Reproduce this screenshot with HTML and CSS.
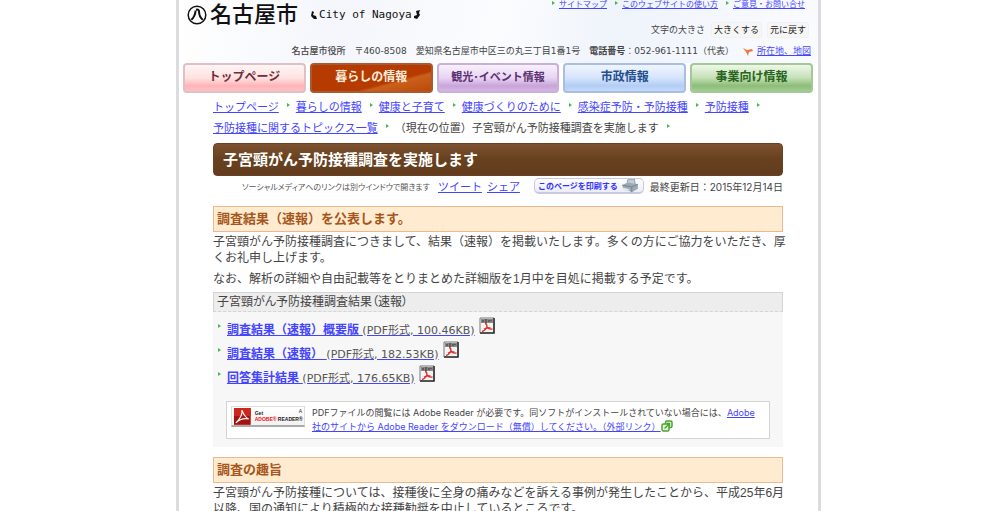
FILE: index.html
```html
<!DOCTYPE html>
<html lang="ja">
<head>
<meta charset="utf-8">
<title>子宮頸がん予防接種調査を実施します</title>
<link rel="stylesheet" href="styles.css">
</head>
<body>
<div class="page">
  <header class="header">
    <div class="header-top">
      <div class="logo">
        <svg class="logo-mark" viewBox="0 0 20 20" aria-hidden="true"><circle cx="10" cy="10" r="8.8" fill="none" stroke="#111" stroke-width="1.5"/><path d="M8.6 5.5C8.3 9.500 7 12.500 4.300 14.800M9 4.800C11.200 4.200 12 5 12 6.500C12.100 10.500 13.600 13 15.800 14.700" fill="none" stroke="#111" stroke-width="2"/></svg>
        <span class="logo-name">名古屋市</span>
        <span class="logo-en"><svg class="flourish" viewBox="0 0 6 10" aria-hidden="true"><path d="M1 1L3 2L2 5L5 6L6 9L3 9L0 6Z" fill="#111"/></svg>City of Nagoya<svg class="flourish" viewBox="0 0 6 10" aria-hidden="true"><path d="M2 1L6 0L5 3L6 5L3 9L0 8L0 6L3 5Z" fill="#111"/></svg></span>
      </div>
      <div class="header-side">
        <ul class="top-links">
          <li><a href="#">サイトマップ</a></li>
          <li><a href="#">このウェブサイトの使い方</a></li>
          <li><a href="#">ご意見・お問い合せ</a></li>
        </ul>
        <div class="text-size">
          <span>文字の大きさ</span>
          <button type="button">大きくする</button>
          <button type="button">元に戻す</button>
        </div>
      </div>
    </div>
    <address class="address">
      <b class="office">名古屋市役所</b>
      <span>〒460-8508</span>
      <span>愛知県名古屋市中区三の丸三丁目1番1号</span>
      <span><b>電話番号</b>：052-961-1111（代表）</span>
      <span class="map"><svg class="map-icon" viewBox="0 0 10 8" aria-hidden="true"><path d="M0 0L4 2L9 1L10 3L6 4L5 8L3 4Z" fill="#f07840"/></svg><a href="#">所在地、地図</a></span>
    </address>
  </header>
  <nav class="nav">
    <a class="tab tab-top" href="#">トップページ</a>
    <a class="tab tab-life" href="#">暮らしの情報</a>
    <a class="tab tab-event" href="#">観光･イベント情報</a>
    <a class="tab tab-gov" href="#">市政情報</a>
    <a class="tab tab-biz" href="#">事業向け情報</a>
  </nav>
  <main class="content">
    <ol class="crumbs">
      <li><a href="#">トップページ</a></li>
      <li><a href="#">暮らしの情報</a></li>
      <li><a href="#">健康と子育て</a></li>
      <li><a href="#">健康づくりのために</a></li>
      <li><a href="#">感染症予防・予防接種</a></li>
      <li><a href="#">予防接種</a></li>
      <li><a href="#">予防接種に関するトピックス一覧</a></li>
      <li>（現在の位置）子宮頸がん予防接種調査を実施します</li>
    </ol>
    <h1 class="title">子宮頸がん予防接種調査を実施します</h1>
    <div class="meta">
      <small class="hint">ソーシャルメディアへのリンクは別ウインドウで開きます</small>
      <span class="share"><a href="#">ツイート</a><a href="#">シェア</a></span>
      <button class="print" type="button">このページを印刷する<svg class="printer" viewBox="0 0 20 16" aria-hidden="true"><path d="M7 1L15 0L16 6L7 7Z" fill="#c5cdd4" stroke="#8c9ba5"/><path d="M1 7L7 4L19 6L19 11L12 15L2 10Z" fill="#9aaab4"/><path d="M1 7L12 9L19 6M12 9V15" fill="none" stroke="#71818c"/><path d="M3 10L10 12L6 14L1 11Z" fill="#dfe5e8"/></svg></button>
      <span>最終更新日：2015年12月14日</span>
    </div>
    <h2 class="section">調査結果（速報）を公表します。</h2>
    <p class="text">子宮頸がん予防接種調査につきまして、結果（速報）を掲載いたします。多くの方にご協力をいただき、厚<br>くお礼申し上げます。</p>
    <p class="text">なお、解析の詳細や自由記載等をとりまとめた詳細版を1月中を目処に掲載する予定です。</p>
    <section class="files">
      <h3 class="files-title">子宮頸がん予防接種調査結果（速報）</h3>
      <ul class="file-list">
        <li><a href="#"><b>調査結果（速報）概要版</b> <span class="size">(PDF形式, 100.46KB)</span></a><svg class="pdf" viewBox="0 0 16 17"><use href="#pdf-shape"/></svg></li>
        <li><a href="#"><b>調査結果（速報）</b> <span class="size">(PDF形式, 182.53KB)</span></a><svg class="pdf" viewBox="0 0 16 17"><use href="#pdf-shape"/></svg></li>
        <li><a href="#"><b>回答集計結果</b> <span class="size">(PDF形式, 176.65KB)</span></a><svg class="pdf" viewBox="0 0 16 17"><use href="#pdf-shape"/></svg></li>
      </ul>
      <div class="reader">
        <a class="reader-badge" href="#"><svg class="reader-icon" viewBox="0 0 17 17" aria-hidden="true"><rect width="17" height="17" fill="#a9120c"/><path d="M0 0H17V8H0Z" fill="#cf261c"/><path d="M8 2C10 7 12 10 15 11C11 10 6 11 2 15C6 11 9 7 8 2Z" fill="none" stroke="#fff" stroke-width="1.2"/></svg><span class="reader-label"><span>Get</span><span class="reader-brand"><em>ADOBE®</em> READER®</span></span><span class="reader-mark">A</span></a>
        <p class="reader-text">PDFファイルの閲覧には Adobe Reader が必要です。同ソフトがインストールされていない場合には、<a href="#">Adobe<br>社のサイトから Adobe Reader をダウンロード（無償）してください。（外部リンク）</a><svg class="external" viewBox="0 0 12 12" aria-hidden="true"><rect x="4.5" y="1" width="6.5" height="6.5" rx="1.5" fill="#e5f5dc" stroke="#48a52c" stroke-width="1.5"/><rect x="1" y="4" width="7" height="7" rx="1.5" fill="#e5f5dc" stroke="#48a52c" stroke-width="1.5"/><path d="M3.5 8.5L8.5 3.5M6 3.5H8.5V6" fill="none" stroke="#48a52c" stroke-width="1.3"/></svg></p>
      </div>
    </section>
    <h2 class="section">調査の趣旨</h2>
    <p class="text">子宮頸がん予防接種については、接種後に全身の痛みなどを訴える事例が発生したことから、平成25年6月<br>以降、国の通知により積極的な接種勧奨を中止しているところです。</p>
  </main>
</div>
<svg class="defs" aria-hidden="true">
  <symbol id="pdf-shape" viewBox="0 0 16 17"><path d="M1 1H15V16H1Z" fill="#f6f3f3" stroke="#777"/><path d="M15 1V16H1" fill="none" stroke="#333" stroke-width="1.6"/><path d="M2 2H14V6H2Z" fill="#888"/><path d="M4 3V5M6 3H8M6 5H8M10 3V5M12 3V4" stroke="#333"/><path d="M6 6.500C8 6.500 8 9 8 10C9.500 12 11 12.500 13.500 12M8 10C7 12 5 14 3 14.500M5 12C7 11 9 10.500 11.500 11" fill="none" stroke="#e02c2c" stroke-width="1.3"/></symbol>
</svg>
</body>
</html>
```
FILE: styles.css
```css
* { box-sizing: border-box; }
html { height: 100%; overflow: hidden; }
body {
  margin: 0;
  padding-right: 3px;
  height: 100%;
  background: #fff;
  color: #444;
  font-family: "Liberation Sans", "Noto Sans CJK JP", sans-serif;
  font-size: 12px;
}
a { color: #44f; text-decoration: underline; }
ul, ol { list-style: none; margin: 0; padding: 0; }
button { font-family: inherit; }
.page {
  max-width: 645px;
  min-height: 100%;
  margin: 0 auto;
  border: solid #dcdcde;
  border-width: 0 3px;
}
.header {
  height: 63px;
  background: linear-gradient(100deg, #fff 0%, #f4f6fc 25%, #fbfcfe 50%, #eff4fb 68%, #fafbfe 100%);
}
.header-top { display: flex; justify-content: space-between; padding: 0 10px 0 8px; }
.logo { display: flex; align-items: center; gap: 3px; height: 30px; color: #111; }
.logo-mark { width: 20px; height: 20px; }
.logo-name { font-size: 22px; line-height: 30px; font-weight: 500; }
.logo-en {
  display: flex;
  align-items: center;
  gap: 2px;
  margin-left: 10px;
  font: 11px/30px "DejaVu Sans Mono", monospace;
}
.flourish { width: 6px; height: 10px; }
.header-side { display: flex; flex-direction: column; align-items: flex-end; gap: 13px; }
.top-links { display: flex; gap: 15px; padding-right: 3px; font-size: 8px; line-height: 10px; }
.top-links li { position: relative; }
.top-links li::before { content: ""; position: absolute; left: -7px; top: 1px; border: solid transparent; border-width: 2px 0 2px 3px; border-left-color: #4b4; }
.text-size { display: flex; gap: 7px; align-items: center; font-size: 9px; line-height: 14px; }
.text-size button { margin: 0; padding: 0 2px; border: 0; border-radius: 2px; background: #f6f6f6; color: #222; font-size: 9px; line-height: 14px; box-shadow: 0 0 0 1px #f1f1f3; }
.address { display: flex; justify-content: flex-end; gap: 9px; padding: 8px 7px 0; font: 9px/13px "DejaVu Sans", "Noto Sans CJK JP", sans-serif; white-space: nowrap; }
.office { font-weight: 500; }
.map { display: flex; align-items: center; gap: 4px; }
.map-icon { width: 10px; height: 8px; }
.nav { display: grid; grid-template-columns: repeat(5, 1fr); gap: 4px; padding: 0 5px 0 4px; }
.tab {
  height: 30px;
  border: 2px solid;
  border-radius: 4px;
  font-size: 12px;
  line-height: 25px;
  font-weight: 700;
  text-align: center;
  text-decoration: none;
  white-space: nowrap;
}
.tab-top { border-color: #dfc0c6; background: linear-gradient(#fff5f5, #ffe2e2 50%, #ffb4b8 80%, #ffc0c2); color: #722c38; }
.tab-life { border-color: #a85a32; background: linear-gradient(165deg, #b63b00 65%, #c9601c 70%, #bb4a08); color: #ffeedd; }
.tab-event { border-color: #c8b0d6; background: linear-gradient(#f8f0fc, #e8d4f2 50%, #c8a4da 80%, #d5b6e2); color: #593070; font-size: 11px; }
.tab-gov { border-color: #aabfe0; background: linear-gradient(#eff5ff, #d5e4fb 50%, #b2cdf5 80%, #c4dafa); color: #244f8c; }
.tab-biz { border-color: #a5c89a; background: linear-gradient(#eef8e8, #c4e0b5 50%, #8dbd78 80%, #a3cd90); color: #286420; }
.content { padding: 4px 35px 0 34px; }
.crumbs { display: flex; flex-wrap: wrap; column-gap: 17px; font-size: 11px; line-height: 21px; }
.crumbs li { position: relative; white-space: nowrap; }
.crumbs li::after { content: ""; position: absolute; right: -11px; top: 6px; border: solid transparent; border-width: 2px 0 2px 3px; border-left-color: #4b4; }
.title {
  margin: 4px 0 0;
  padding: 0 9px;
  border: 1px solid #6a4222;
  border-radius: 4px;
  background: linear-gradient(#7d5230, #68421f 45%, #623c1d);
  color: #fff;
  font-size: 15px;
  line-height: 31px;
}
.meta { display: flex; align-items: center; justify-content: flex-end; height: 20px; font: 10px Inter, "Noto Sans CJK JP", sans-serif; white-space: nowrap; }
.hint { margin-right: 8px; font-size: 8px; color: #555; font-feature-settings: "palt"; }
.share { display: flex; gap: 5px; margin-right: 14px; font-size: 11px; }
.print {
  display: flex;
  align-items: center;
  gap: 2px;
  height: 16px;
  margin: 0 6px 0 0;
  padding: 0 3px;
  border: 1px solid #c8c8e0;
  border-bottom-width: 2px;
  border-radius: 5px;
  background: linear-gradient(#fff, #ececf6);
  color: #33f;
  font-size: 8px;
  font-weight: 700;
}
.printer { width: 20px; height: 14px; }
.section {
  margin: 10px 0 0;
  padding: 0 3px;
  border: 1px solid #f0b890;
  background: #ffebcf;
  color: #a5561c;
  font-size: 13px;
  line-height: 24px;
}
.text { margin: 2px 0 5px; line-height: 16px; white-space: nowrap; }
.files { margin-top: 5px; padding-bottom: 8px; background: #f7f7f7; }
.files-title { margin: 0; padding: 0 3px; border: 1px solid #d4d4d4; border-bottom-style: dashed; background: #ededed; font-size: 12px; line-height: 18px; font-weight: 400; font-feature-settings: "palt"; }
.file-list { padding: 4px 0 0 14px; }
.file-list li { position: relative; display: flex; align-items: center; gap: 4px; height: 24px; }
.file-list li::before { content: ""; position: absolute; left: -9px; top: 8px; border: solid transparent; border-width: 2px 0 2px 3px; border-left-color: #4b4; }
.size { color: #555; font: 11px "DejaVu Sans", "Noto Sans CJK JP", sans-serif; }
.pdf { width: 16px; height: 17px; margin-bottom: 6px; }
.reader { display: flex; gap: 7px; margin: 13px 13px 0; padding: 4px; border: 1px solid #d5d5d5; background: #fff; }
.reader-badge { display: flex; align-items: center; gap: 4px; width: 74px; height: 21px; padding: 1px 2px; border: 1px solid #ddd; border-bottom: 2px solid #aaa; background: linear-gradient(#fff, #f2f2f2); color: #222; text-decoration: none; }
.reader-icon { width: 17px; height: 17px; }
.reader-label { display: flex; flex-direction: column; font-size: 5px; line-height: 6px; font-weight: 700; white-space: nowrap; }
.reader-label em { color: #e11; font-style: normal; }
.reader-mark { align-self: flex-start; margin-left: -8px; font-size: 5px; line-height: 6px; }
.reader-text { margin: 0; font: 9px/14px Inter, "Noto Sans CJK JP", sans-serif; white-space: nowrap; }
.external { width: 12px; height: 12px; vertical-align: -2px; }
.defs { display: none; }
```
